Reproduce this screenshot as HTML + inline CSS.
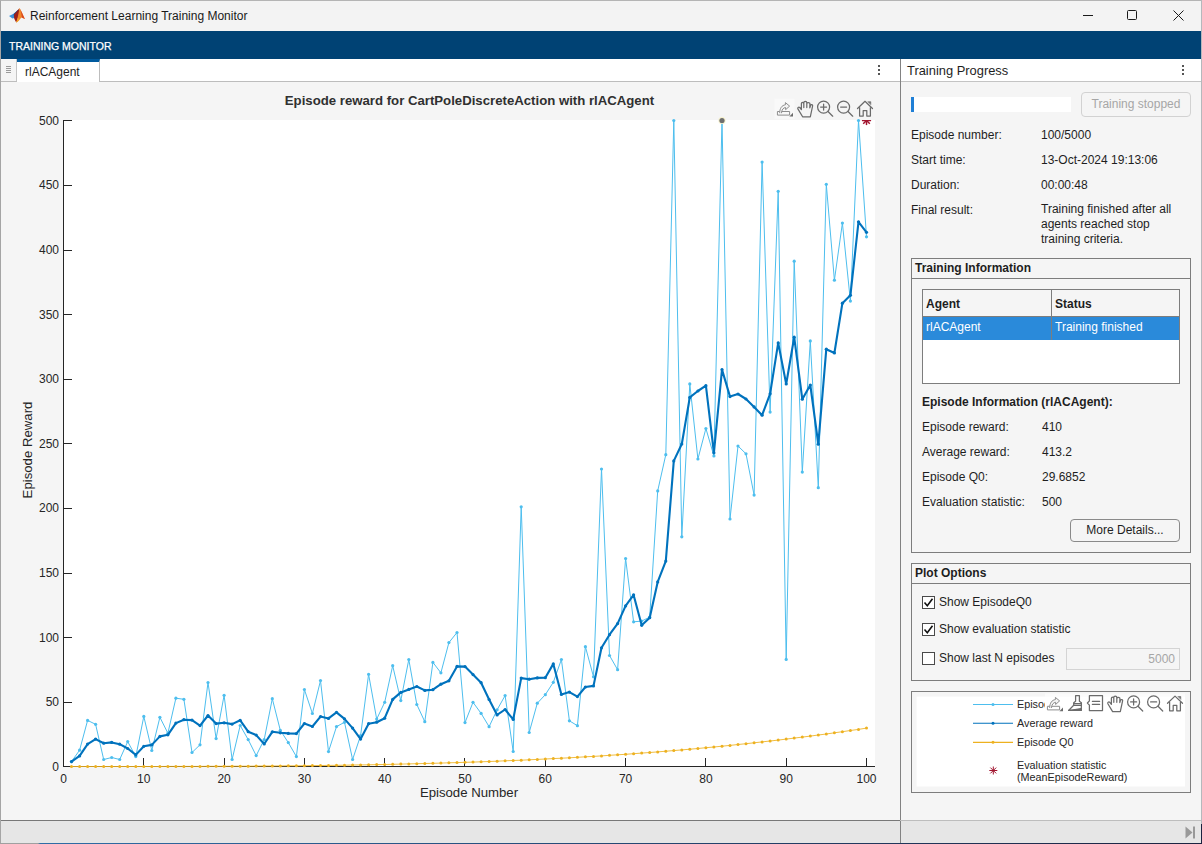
<!DOCTYPE html>
<html><head><meta charset="utf-8"><title>Reinforcement Learning Training Monitor</title>
<style>
*{box-sizing:border-box;margin:0;padding:0}
html,body{width:1202px;height:844px;overflow:hidden;background:#1b2340}
body{font-family:"Liberation Sans",sans-serif;font-size:12px;color:#1e1e1e;position:relative}
.abs{position:absolute}
#win{position:absolute;left:0;top:0;width:1201px;height:843px;background:#f5f5f5;border-top:1px solid #b4b4b4;border-left:1px solid #a5a5a5}
#titlebar{position:absolute;left:1px;top:1px;width:1200px;height:30px;background:#f3f3f3}
#titlebar .t{position:absolute;left:29px;top:8px;font-size:12px;color:#1a1a1a;white-space:nowrap}
#strip{position:absolute;left:1px;top:31px;width:1200px;height:28px;background:#004274}
#strip .t{position:absolute;left:8px;top:9px;font-size:10.5px;color:#fff;white-space:nowrap;-webkit-text-stroke:0.25px #fff}
#tabrow{position:absolute;left:1px;top:59px;width:899px;height:23px;background:#fff;border-bottom:1px solid #bdbdbd}
#grip{position:absolute;left:0;top:0;width:16px;height:22px;background:#f5f5f5;border-right:1px solid #c4c4c4}
#tab{position:absolute;left:16px;top:0;width:83px;height:23px;background:#fff;border-top:3px solid #005a9e;border-right:1px solid #bdbdbd}
#tab span{position:absolute;left:8px;top:3px;font-size:12px;color:#1e1e1e}
#doc{position:absolute;left:1px;top:82px;width:899px;height:738px;background:#f5f5f5}
.chart{position:absolute;left:-1px;top:0}
#vdiv{position:absolute;left:900px;top:59px;width:1px;height:784px;background:#828282}
#side{position:absolute;left:901px;top:59px;width:300px;height:761px;background:#f5f5f5}
#sidehead{position:absolute;left:0;top:0;width:300px;height:23px;background:#fff;border-bottom:1px solid #c4c4c4}
#sidehead span{position:absolute;left:6px;top:4px;font-size:12.9px;color:#1e1e1e}
.kebab{position:absolute;width:2px;height:2px;background:#555;box-shadow:0 4px 0 #555,0 8px 0 #555}
#status{position:absolute;left:1px;top:820px;width:1200px;height:23px;background:#e6e6e6;border-top:1px solid #bdbdbd}
.lbl{position:absolute;white-space:nowrap;font-size:12px;line-height:15px;color:#1e1e1e}
.panel{position:absolute;border:1px solid #7d7d7d}
.panel .pt{position:absolute;left:0;top:0;right:0;height:20px;border-bottom:1px solid #7d7d7d;font-weight:bold;font-size:12px;padding:2px 0 0 3px}
.btn{position:absolute;border:1px solid #8a8a8a;border-radius:4px;text-align:center;font-size:12px;background:#f5f5f5}
.cb{position:absolute;width:13px;height:13px;border:1px solid #4a4a4a;background:#fff}
</style></head><body>
<div id="win"></div><div class="abs" style="left:1201px;top:0;width:1px;height:824px;background:#b4b8bc"></div><div class="abs" style="left:0;top:843px;width:1202px;height:1px;background:linear-gradient(90deg,#a0a0a0 0,#a0a0a0 38px,#2f6da6 40px,#1b2340 100%)"></div>
<div id="titlebar">
 <svg class="abs" style="left:8px;top:6.5px" width="16" height="15" viewBox="0 0 16 15">
  <path d="M0 8 L5.1 5.5 L9.4 1.5 L7 8 L5.1 10 L3.5 10.5 Z" fill="#3a8fd8"/>
  <path d="M4.6 6 L9.4 1.5 L7.5 7.5 L5.1 10 Z" fill="#20508f"/>
  <path d="M5.1 6.6 L9.4 1.5 L10.3 0.3 L10.5 6 L7.2 14.5 L5.4 11.1 L5.1 10 Z" fill="#9c1f1a"/>
  <path d="M10.3 0.3 C11 0.3 12 2 15.9 11.1 C14.5 10.5 13.5 9.8 12.5 9.5 C11 11 9 14 7.2 14.5 C8.5 11 9.8 5 10.3 0.3 Z" fill="#f0862a"/>
  <path d="M11 1 C12 2.5 14 7 15.9 11.1 C14.5 10.5 13.5 9.8 12.8 9.6 C12.6 6 12 3 11 1 Z" fill="#d9451f"/>
  <path d="M7.2 14.5 C8 13 8.6 11.5 9 10 L10.2 11.5 C9.2 13 8 14.3 7.2 14.5Z" fill="#f7a81d"/>
 </svg>
 <div class="t">Reinforcement Learning Training Monitor</div>
 <svg class="abs" style="left:1070px;top:0" width="130" height="30" viewBox="0 0 130 30" fill="none" stroke="#1a1a1a" stroke-width="1">
  <path d="M11.5 14.5 H21.5" shape-rendering="crispEdges"/>
  <rect x="56.5" y="9.5" width="9" height="9" rx="1"/>
  <path d="M102.5 9.5 L112.5 19.5 M112.5 9.5 L102.5 19.5"/>
 </svg>
</div>
<div id="strip"><div class="t">TRAINING MONITOR</div></div>
<div id="tabrow">
 <div id="grip"><svg class="abs" style="left:5px;top:7px" width="6" height="9"><path d="M0 0.5H5M0 2.5H5M0 4.5H5M0 6.5H5" stroke="#9a9a9a" stroke-width="1" shape-rendering="crispEdges"/></svg></div>
 <div id="tab"><span>rlACAgent</span></div>
 <div class="kebab" style="left:877px;top:6px"></div>
</div>
<div id="doc">
<svg class="chart" width="900" height="738" viewBox="0 82 900 738">
<defs><clipPath id="pc"><rect x="63" y="120" width="812" height="647"/></clipPath></defs>
<rect x="63" y="120" width="812" height="647" fill="#fff"/>
<polyline clip-path="url(#pc)" points="71.5,761.6 79.6,750.2 87.6,720.4 95.6,724.3 103.7,759.5 111.7,757.5 119.7,759.5 127.7,741.6 135.8,756.6 143.8,716.4 151.8,750.5 159.9,717.3 167.9,733.2 175.9,698.2 183.9,699.3 192.0,752.5 200.0,744.8 208.0,682.5 216.1,738.6 224.1,695.3 232.1,759.5 240.2,725.5 248.2,739.6 256.2,755.6 264.2,739.6 272.3,698.7 280.3,730.3 288.3,742.6 296.4,756.6 304.4,689.5 312.4,713.5 320.5,680.6 328.5,751.6 336.5,726.6 344.5,722.3 352.6,759.5 360.6,735.6 368.6,674.3 376.7,719.1 384.7,702.3 392.7,665.7 400.8,700.6 408.8,659.5 416.8,704.5 424.8,721.7 432.9,662.4 440.9,672.8 448.9,642.6 457.0,632.5 465.0,722.6 473.0,702.3 481.1,713.4 489.1,726.7 497.1,709.8 505.1,695.6 513.2,751.5 521.2,506.8 529.2,732.5 537.3,703.2 545.3,694.7 553.3,682.3 561.4,659.5 569.4,720.8 577.4,725.7 585.4,646.7 593.5,676.8 601.5,469.0 609.5,655.5 617.6,669.7 625.6,558.5 633.6,621.8 641.7,621.1 649.7,617.1 657.7,490.9 665.8,454.7 673.8,120.5 681.8,536.8 689.8,383.9 697.9,459.0 705.9,428.5 713.9,455.9 722.0,120.5 730.0,519.0 738.0,446.0 746.0,453.8 754.1,495.1 762.1,162.1 770.1,412.1 778.2,191.3 786.2,659.4 794.2,261.2 802.3,472.1 810.3,340.9 818.3,487.7 826.3,184.3 834.4,280.2 842.4,223.1 850.4,301.1 858.5,120.5 866.5,236.8" fill="none" stroke="#4DBEEE" stroke-width="1" stroke-linejoin="round"/>
<circle cx="71.5" cy="761.6" r="1.6" fill="#4DBEEE"/><circle cx="79.6" cy="750.2" r="1.6" fill="#4DBEEE"/><circle cx="87.6" cy="720.4" r="1.6" fill="#4DBEEE"/><circle cx="95.6" cy="724.3" r="1.6" fill="#4DBEEE"/><circle cx="103.7" cy="759.5" r="1.6" fill="#4DBEEE"/><circle cx="111.7" cy="757.5" r="1.6" fill="#4DBEEE"/><circle cx="119.7" cy="759.5" r="1.6" fill="#4DBEEE"/><circle cx="127.7" cy="741.6" r="1.6" fill="#4DBEEE"/><circle cx="135.8" cy="756.6" r="1.6" fill="#4DBEEE"/><circle cx="143.8" cy="716.4" r="1.6" fill="#4DBEEE"/><circle cx="151.8" cy="750.5" r="1.6" fill="#4DBEEE"/><circle cx="159.9" cy="717.3" r="1.6" fill="#4DBEEE"/><circle cx="167.9" cy="733.2" r="1.6" fill="#4DBEEE"/><circle cx="175.9" cy="698.2" r="1.6" fill="#4DBEEE"/><circle cx="183.9" cy="699.3" r="1.6" fill="#4DBEEE"/><circle cx="192.0" cy="752.5" r="1.6" fill="#4DBEEE"/><circle cx="200.0" cy="744.8" r="1.6" fill="#4DBEEE"/><circle cx="208.0" cy="682.5" r="1.6" fill="#4DBEEE"/><circle cx="216.1" cy="738.6" r="1.6" fill="#4DBEEE"/><circle cx="224.1" cy="695.3" r="1.6" fill="#4DBEEE"/><circle cx="232.1" cy="759.5" r="1.6" fill="#4DBEEE"/><circle cx="240.2" cy="725.5" r="1.6" fill="#4DBEEE"/><circle cx="248.2" cy="739.6" r="1.6" fill="#4DBEEE"/><circle cx="256.2" cy="755.6" r="1.6" fill="#4DBEEE"/><circle cx="264.2" cy="739.6" r="1.6" fill="#4DBEEE"/><circle cx="272.3" cy="698.7" r="1.6" fill="#4DBEEE"/><circle cx="280.3" cy="730.3" r="1.6" fill="#4DBEEE"/><circle cx="288.3" cy="742.6" r="1.6" fill="#4DBEEE"/><circle cx="296.4" cy="756.6" r="1.6" fill="#4DBEEE"/><circle cx="304.4" cy="689.5" r="1.6" fill="#4DBEEE"/><circle cx="312.4" cy="713.5" r="1.6" fill="#4DBEEE"/><circle cx="320.5" cy="680.6" r="1.6" fill="#4DBEEE"/><circle cx="328.5" cy="751.6" r="1.6" fill="#4DBEEE"/><circle cx="336.5" cy="726.6" r="1.6" fill="#4DBEEE"/><circle cx="344.5" cy="722.3" r="1.6" fill="#4DBEEE"/><circle cx="352.6" cy="759.5" r="1.6" fill="#4DBEEE"/><circle cx="360.6" cy="735.6" r="1.6" fill="#4DBEEE"/><circle cx="368.6" cy="674.3" r="1.6" fill="#4DBEEE"/><circle cx="376.7" cy="719.1" r="1.6" fill="#4DBEEE"/><circle cx="384.7" cy="702.3" r="1.6" fill="#4DBEEE"/><circle cx="392.7" cy="665.7" r="1.6" fill="#4DBEEE"/><circle cx="400.8" cy="700.6" r="1.6" fill="#4DBEEE"/><circle cx="408.8" cy="659.5" r="1.6" fill="#4DBEEE"/><circle cx="416.8" cy="704.5" r="1.6" fill="#4DBEEE"/><circle cx="424.8" cy="721.7" r="1.6" fill="#4DBEEE"/><circle cx="432.9" cy="662.4" r="1.6" fill="#4DBEEE"/><circle cx="440.9" cy="672.8" r="1.6" fill="#4DBEEE"/><circle cx="448.9" cy="642.6" r="1.6" fill="#4DBEEE"/><circle cx="457.0" cy="632.5" r="1.6" fill="#4DBEEE"/><circle cx="465.0" cy="722.6" r="1.6" fill="#4DBEEE"/><circle cx="473.0" cy="702.3" r="1.6" fill="#4DBEEE"/><circle cx="481.1" cy="713.4" r="1.6" fill="#4DBEEE"/><circle cx="489.1" cy="726.7" r="1.6" fill="#4DBEEE"/><circle cx="497.1" cy="709.8" r="1.6" fill="#4DBEEE"/><circle cx="505.1" cy="695.6" r="1.6" fill="#4DBEEE"/><circle cx="513.2" cy="751.5" r="1.6" fill="#4DBEEE"/><circle cx="521.2" cy="506.8" r="1.6" fill="#4DBEEE"/><circle cx="529.2" cy="732.5" r="1.6" fill="#4DBEEE"/><circle cx="537.3" cy="703.2" r="1.6" fill="#4DBEEE"/><circle cx="545.3" cy="694.7" r="1.6" fill="#4DBEEE"/><circle cx="553.3" cy="682.3" r="1.6" fill="#4DBEEE"/><circle cx="561.4" cy="659.5" r="1.6" fill="#4DBEEE"/><circle cx="569.4" cy="720.8" r="1.6" fill="#4DBEEE"/><circle cx="577.4" cy="725.7" r="1.6" fill="#4DBEEE"/><circle cx="585.4" cy="646.7" r="1.6" fill="#4DBEEE"/><circle cx="593.5" cy="676.8" r="1.6" fill="#4DBEEE"/><circle cx="601.5" cy="469.0" r="1.6" fill="#4DBEEE"/><circle cx="609.5" cy="655.5" r="1.6" fill="#4DBEEE"/><circle cx="617.6" cy="669.7" r="1.6" fill="#4DBEEE"/><circle cx="625.6" cy="558.5" r="1.6" fill="#4DBEEE"/><circle cx="633.6" cy="621.8" r="1.6" fill="#4DBEEE"/><circle cx="641.7" cy="621.1" r="1.6" fill="#4DBEEE"/><circle cx="649.7" cy="617.1" r="1.6" fill="#4DBEEE"/><circle cx="657.7" cy="490.9" r="1.6" fill="#4DBEEE"/><circle cx="665.8" cy="454.7" r="1.6" fill="#4DBEEE"/><circle cx="673.8" cy="120.5" r="1.6" fill="#4DBEEE"/><circle cx="681.8" cy="536.8" r="1.6" fill="#4DBEEE"/><circle cx="689.8" cy="383.9" r="1.6" fill="#4DBEEE"/><circle cx="697.9" cy="459.0" r="1.6" fill="#4DBEEE"/><circle cx="705.9" cy="428.5" r="1.6" fill="#4DBEEE"/><circle cx="713.9" cy="455.9" r="1.6" fill="#4DBEEE"/><circle cx="722.0" cy="120.5" r="1.6" fill="#4DBEEE"/><circle cx="730.0" cy="519.0" r="1.6" fill="#4DBEEE"/><circle cx="738.0" cy="446.0" r="1.6" fill="#4DBEEE"/><circle cx="746.0" cy="453.8" r="1.6" fill="#4DBEEE"/><circle cx="754.1" cy="495.1" r="1.6" fill="#4DBEEE"/><circle cx="762.1" cy="162.1" r="1.6" fill="#4DBEEE"/><circle cx="770.1" cy="412.1" r="1.6" fill="#4DBEEE"/><circle cx="778.2" cy="191.3" r="1.6" fill="#4DBEEE"/><circle cx="786.2" cy="659.4" r="1.6" fill="#4DBEEE"/><circle cx="794.2" cy="261.2" r="1.6" fill="#4DBEEE"/><circle cx="802.3" cy="472.1" r="1.6" fill="#4DBEEE"/><circle cx="810.3" cy="340.9" r="1.6" fill="#4DBEEE"/><circle cx="818.3" cy="487.7" r="1.6" fill="#4DBEEE"/><circle cx="826.3" cy="184.3" r="1.6" fill="#4DBEEE"/><circle cx="834.4" cy="280.2" r="1.6" fill="#4DBEEE"/><circle cx="842.4" cy="223.1" r="1.6" fill="#4DBEEE"/><circle cx="850.4" cy="301.1" r="1.6" fill="#4DBEEE"/><circle cx="858.5" cy="120.5" r="1.6" fill="#4DBEEE"/><circle cx="866.5" cy="236.8" r="1.6" fill="#4DBEEE"/>
<polyline clip-path="url(#pc)" points="71.5,761.6 79.6,755.9 87.6,744.1 95.6,739.1 103.7,743.2 111.7,742.4 119.7,744.2 127.7,748.5 135.8,754.9 143.8,746.3 151.8,744.9 159.9,736.4 167.9,734.8 175.9,723.1 183.9,719.7 192.0,720.1 200.0,725.6 208.0,715.5 216.1,723.6 224.1,722.8 232.1,724.1 240.2,720.3 248.2,731.7 256.2,735.1 264.2,744.0 272.3,731.8 280.3,732.8 288.3,733.4 296.4,733.6 304.4,723.5 312.4,726.5 320.5,716.6 328.5,718.4 336.5,712.4 344.5,718.9 352.6,728.1 360.6,739.1 368.6,723.7 376.7,722.2 384.7,718.2 392.7,699.4 400.8,692.4 408.8,689.4 416.8,686.5 424.8,690.4 432.9,689.7 440.9,684.2 448.9,680.8 457.0,666.4 465.0,666.6 473.0,674.6 481.1,682.7 489.1,699.5 497.1,714.9 505.1,709.5 513.2,719.4 521.2,678.1 529.2,679.2 537.3,677.9 545.3,677.7 553.3,663.9 561.4,694.4 569.4,692.1 577.4,696.6 585.4,687.0 593.5,685.9 601.5,647.8 609.5,634.7 617.6,623.6 625.6,605.9 633.6,594.9 641.7,625.3 649.7,617.7 657.7,581.9 665.8,561.1 673.8,460.9 681.8,444.0 689.8,397.4 697.9,391.0 705.9,385.7 713.9,452.8 722.0,369.6 730.0,396.6 738.0,394.0 746.0,399.0 754.1,406.9 762.1,415.2 770.1,393.8 778.2,342.9 786.2,384.0 794.2,337.2 802.3,399.2 810.3,385.0 818.3,444.2 826.3,349.2 834.4,353.0 842.4,303.2 850.4,295.3 858.5,221.8 866.5,232.3" fill="none" stroke="#0072BD" stroke-width="2.1" stroke-linejoin="round"/>
<circle cx="71.5" cy="761.6" r="1.6" fill="#0072BD"/><circle cx="79.6" cy="755.9" r="1.6" fill="#0072BD"/><circle cx="87.6" cy="744.1" r="1.6" fill="#0072BD"/><circle cx="95.6" cy="739.1" r="1.6" fill="#0072BD"/><circle cx="103.7" cy="743.2" r="1.6" fill="#0072BD"/><circle cx="111.7" cy="742.4" r="1.6" fill="#0072BD"/><circle cx="119.7" cy="744.2" r="1.6" fill="#0072BD"/><circle cx="127.7" cy="748.5" r="1.6" fill="#0072BD"/><circle cx="135.8" cy="754.9" r="1.6" fill="#0072BD"/><circle cx="143.8" cy="746.3" r="1.6" fill="#0072BD"/><circle cx="151.8" cy="744.9" r="1.6" fill="#0072BD"/><circle cx="159.9" cy="736.4" r="1.6" fill="#0072BD"/><circle cx="167.9" cy="734.8" r="1.6" fill="#0072BD"/><circle cx="175.9" cy="723.1" r="1.6" fill="#0072BD"/><circle cx="183.9" cy="719.7" r="1.6" fill="#0072BD"/><circle cx="192.0" cy="720.1" r="1.6" fill="#0072BD"/><circle cx="200.0" cy="725.6" r="1.6" fill="#0072BD"/><circle cx="208.0" cy="715.5" r="1.6" fill="#0072BD"/><circle cx="216.1" cy="723.6" r="1.6" fill="#0072BD"/><circle cx="224.1" cy="722.8" r="1.6" fill="#0072BD"/><circle cx="232.1" cy="724.1" r="1.6" fill="#0072BD"/><circle cx="240.2" cy="720.3" r="1.6" fill="#0072BD"/><circle cx="248.2" cy="731.7" r="1.6" fill="#0072BD"/><circle cx="256.2" cy="735.1" r="1.6" fill="#0072BD"/><circle cx="264.2" cy="744.0" r="1.6" fill="#0072BD"/><circle cx="272.3" cy="731.8" r="1.6" fill="#0072BD"/><circle cx="280.3" cy="732.8" r="1.6" fill="#0072BD"/><circle cx="288.3" cy="733.4" r="1.6" fill="#0072BD"/><circle cx="296.4" cy="733.6" r="1.6" fill="#0072BD"/><circle cx="304.4" cy="723.5" r="1.6" fill="#0072BD"/><circle cx="312.4" cy="726.5" r="1.6" fill="#0072BD"/><circle cx="320.5" cy="716.6" r="1.6" fill="#0072BD"/><circle cx="328.5" cy="718.4" r="1.6" fill="#0072BD"/><circle cx="336.5" cy="712.4" r="1.6" fill="#0072BD"/><circle cx="344.5" cy="718.9" r="1.6" fill="#0072BD"/><circle cx="352.6" cy="728.1" r="1.6" fill="#0072BD"/><circle cx="360.6" cy="739.1" r="1.6" fill="#0072BD"/><circle cx="368.6" cy="723.7" r="1.6" fill="#0072BD"/><circle cx="376.7" cy="722.2" r="1.6" fill="#0072BD"/><circle cx="384.7" cy="718.2" r="1.6" fill="#0072BD"/><circle cx="392.7" cy="699.4" r="1.6" fill="#0072BD"/><circle cx="400.8" cy="692.4" r="1.6" fill="#0072BD"/><circle cx="408.8" cy="689.4" r="1.6" fill="#0072BD"/><circle cx="416.8" cy="686.5" r="1.6" fill="#0072BD"/><circle cx="424.8" cy="690.4" r="1.6" fill="#0072BD"/><circle cx="432.9" cy="689.7" r="1.6" fill="#0072BD"/><circle cx="440.9" cy="684.2" r="1.6" fill="#0072BD"/><circle cx="448.9" cy="680.8" r="1.6" fill="#0072BD"/><circle cx="457.0" cy="666.4" r="1.6" fill="#0072BD"/><circle cx="465.0" cy="666.6" r="1.6" fill="#0072BD"/><circle cx="473.0" cy="674.6" r="1.6" fill="#0072BD"/><circle cx="481.1" cy="682.7" r="1.6" fill="#0072BD"/><circle cx="489.1" cy="699.5" r="1.6" fill="#0072BD"/><circle cx="497.1" cy="714.9" r="1.6" fill="#0072BD"/><circle cx="505.1" cy="709.5" r="1.6" fill="#0072BD"/><circle cx="513.2" cy="719.4" r="1.6" fill="#0072BD"/><circle cx="521.2" cy="678.1" r="1.6" fill="#0072BD"/><circle cx="529.2" cy="679.2" r="1.6" fill="#0072BD"/><circle cx="537.3" cy="677.9" r="1.6" fill="#0072BD"/><circle cx="545.3" cy="677.7" r="1.6" fill="#0072BD"/><circle cx="553.3" cy="663.9" r="1.6" fill="#0072BD"/><circle cx="561.4" cy="694.4" r="1.6" fill="#0072BD"/><circle cx="569.4" cy="692.1" r="1.6" fill="#0072BD"/><circle cx="577.4" cy="696.6" r="1.6" fill="#0072BD"/><circle cx="585.4" cy="687.0" r="1.6" fill="#0072BD"/><circle cx="593.5" cy="685.9" r="1.6" fill="#0072BD"/><circle cx="601.5" cy="647.8" r="1.6" fill="#0072BD"/><circle cx="609.5" cy="634.7" r="1.6" fill="#0072BD"/><circle cx="617.6" cy="623.6" r="1.6" fill="#0072BD"/><circle cx="625.6" cy="605.9" r="1.6" fill="#0072BD"/><circle cx="633.6" cy="594.9" r="1.6" fill="#0072BD"/><circle cx="641.7" cy="625.3" r="1.6" fill="#0072BD"/><circle cx="649.7" cy="617.7" r="1.6" fill="#0072BD"/><circle cx="657.7" cy="581.9" r="1.6" fill="#0072BD"/><circle cx="665.8" cy="561.1" r="1.6" fill="#0072BD"/><circle cx="673.8" cy="460.9" r="1.6" fill="#0072BD"/><circle cx="681.8" cy="444.0" r="1.6" fill="#0072BD"/><circle cx="689.8" cy="397.4" r="1.6" fill="#0072BD"/><circle cx="697.9" cy="391.0" r="1.6" fill="#0072BD"/><circle cx="705.9" cy="385.7" r="1.6" fill="#0072BD"/><circle cx="713.9" cy="452.8" r="1.6" fill="#0072BD"/><circle cx="722.0" cy="369.6" r="1.6" fill="#0072BD"/><circle cx="730.0" cy="396.6" r="1.6" fill="#0072BD"/><circle cx="738.0" cy="394.0" r="1.6" fill="#0072BD"/><circle cx="746.0" cy="399.0" r="1.6" fill="#0072BD"/><circle cx="754.1" cy="406.9" r="1.6" fill="#0072BD"/><circle cx="762.1" cy="415.2" r="1.6" fill="#0072BD"/><circle cx="770.1" cy="393.8" r="1.6" fill="#0072BD"/><circle cx="778.2" cy="342.9" r="1.6" fill="#0072BD"/><circle cx="786.2" cy="384.0" r="1.6" fill="#0072BD"/><circle cx="794.2" cy="337.2" r="1.6" fill="#0072BD"/><circle cx="802.3" cy="399.2" r="1.6" fill="#0072BD"/><circle cx="810.3" cy="385.0" r="1.6" fill="#0072BD"/><circle cx="818.3" cy="444.2" r="1.6" fill="#0072BD"/><circle cx="826.3" cy="349.2" r="1.6" fill="#0072BD"/><circle cx="834.4" cy="353.0" r="1.6" fill="#0072BD"/><circle cx="842.4" cy="303.2" r="1.6" fill="#0072BD"/><circle cx="850.4" cy="295.3" r="1.6" fill="#0072BD"/><circle cx="858.5" cy="221.8" r="1.6" fill="#0072BD"/><circle cx="866.5" cy="232.3" r="1.6" fill="#0072BD"/>
<g stroke="#262626" stroke-width="1" shape-rendering="crispEdges">
<line x1="63.5" y1="120" x2="63.5" y2="767"/>
<line x1="63" y1="766.5" x2="875" y2="766.5"/>
<line x1="63.5" y1="766" x2="63.5" y2="758"/>
<line x1="143.5" y1="766" x2="143.5" y2="758"/>
<line x1="224.5" y1="766" x2="224.5" y2="758"/>
<line x1="304.5" y1="766" x2="304.5" y2="758"/>
<line x1="384.5" y1="766" x2="384.5" y2="758"/>
<line x1="464.5" y1="766" x2="464.5" y2="758"/>
<line x1="545.5" y1="766" x2="545.5" y2="758"/>
<line x1="625.5" y1="766" x2="625.5" y2="758"/>
<line x1="705.5" y1="766" x2="705.5" y2="758"/>
<line x1="786.5" y1="766" x2="786.5" y2="758"/>
<line x1="866.5" y1="766" x2="866.5" y2="758"/>
<line x1="63" y1="766.5" x2="71.5" y2="766.5"/>
<line x1="63" y1="702.5" x2="71.5" y2="702.5"/>
<line x1="63" y1="637.5" x2="71.5" y2="637.5"/>
<line x1="63" y1="573.5" x2="71.5" y2="573.5"/>
<line x1="63" y1="508.5" x2="71.5" y2="508.5"/>
<line x1="63" y1="443.5" x2="71.5" y2="443.5"/>
<line x1="63" y1="379.5" x2="71.5" y2="379.5"/>
<line x1="63" y1="314.5" x2="71.5" y2="314.5"/>
<line x1="63" y1="250.5" x2="71.5" y2="250.5"/>
<line x1="63" y1="185.5" x2="71.5" y2="185.5"/>
<line x1="63" y1="120.5" x2="71.5" y2="120.5"/>
</g>
<polyline points="71.5,766.5 79.6,766.5 87.6,766.5 95.6,766.5 103.7,766.5 111.7,766.5 119.7,766.5 127.7,766.5 135.8,766.5 143.8,766.5 151.8,766.5 159.9,766.5 167.9,766.4 175.9,766.4 183.9,766.4 192.0,766.4 200.0,766.4 208.0,766.3 216.1,766.3 224.1,766.3 232.1,766.2 240.2,766.2 248.2,766.2 256.2,766.1 264.2,766.0 272.3,766.0 280.3,765.9 288.3,765.8 296.4,765.8 304.4,765.7 312.4,765.6 320.5,765.5 328.5,765.4 336.5,765.3 344.5,765.2 352.6,765.0 360.6,764.9 368.6,764.8 376.7,764.6 384.7,764.5 392.7,764.3 400.8,764.1 408.8,763.9 416.8,763.7 424.8,763.5 432.9,763.3 440.9,763.1 448.9,762.8 457.0,762.6 465.0,762.3 473.0,762.1 481.1,761.8 489.1,761.5 497.1,761.2 505.1,760.8 513.2,760.5 521.2,760.2 529.2,759.8 537.3,759.4 545.3,759.0 553.3,758.6 561.4,758.2 569.4,757.8 577.4,757.3 585.4,756.8 593.5,756.4 601.5,755.9 609.5,755.3 617.6,754.8 625.6,754.3 633.6,753.7 641.7,753.1 649.7,752.5 657.7,751.9 665.8,751.2 673.8,750.6 681.8,749.9 689.8,749.2 697.9,748.5 705.9,747.7 713.9,747.0 722.0,746.2 730.0,745.4 738.0,744.5 746.0,743.7 754.1,742.8 762.1,741.9 770.1,741.0 778.2,740.1 786.2,739.1 794.2,738.1 802.3,737.1 810.3,736.1 818.3,735.0 826.3,734.0 834.4,732.8 842.4,731.7 850.4,730.5 858.5,729.4 866.5,728.1" fill="none" stroke="#EDB120" stroke-width="1" stroke-opacity="0.85" stroke-linejoin="round"/>
<circle cx="71.5" cy="766.5" r="1.5" fill="#EDB120"/><circle cx="79.6" cy="766.5" r="1.5" fill="#EDB120"/><circle cx="87.6" cy="766.5" r="1.5" fill="#EDB120"/><circle cx="95.6" cy="766.5" r="1.5" fill="#EDB120"/><circle cx="103.7" cy="766.5" r="1.5" fill="#EDB120"/><circle cx="111.7" cy="766.5" r="1.5" fill="#EDB120"/><circle cx="119.7" cy="766.5" r="1.5" fill="#EDB120"/><circle cx="127.7" cy="766.5" r="1.5" fill="#EDB120"/><circle cx="135.8" cy="766.5" r="1.5" fill="#EDB120"/><circle cx="143.8" cy="766.5" r="1.5" fill="#EDB120"/><circle cx="151.8" cy="766.5" r="1.5" fill="#EDB120"/><circle cx="159.9" cy="766.5" r="1.5" fill="#EDB120"/><circle cx="167.9" cy="766.4" r="1.5" fill="#EDB120"/><circle cx="175.9" cy="766.4" r="1.5" fill="#EDB120"/><circle cx="183.9" cy="766.4" r="1.5" fill="#EDB120"/><circle cx="192.0" cy="766.4" r="1.5" fill="#EDB120"/><circle cx="200.0" cy="766.4" r="1.5" fill="#EDB120"/><circle cx="208.0" cy="766.3" r="1.5" fill="#EDB120"/><circle cx="216.1" cy="766.3" r="1.5" fill="#EDB120"/><circle cx="224.1" cy="766.3" r="1.5" fill="#EDB120"/><circle cx="232.1" cy="766.2" r="1.5" fill="#EDB120"/><circle cx="240.2" cy="766.2" r="1.5" fill="#EDB120"/><circle cx="248.2" cy="766.2" r="1.5" fill="#EDB120"/><circle cx="256.2" cy="766.1" r="1.5" fill="#EDB120"/><circle cx="264.2" cy="766.0" r="1.5" fill="#EDB120"/><circle cx="272.3" cy="766.0" r="1.5" fill="#EDB120"/><circle cx="280.3" cy="765.9" r="1.5" fill="#EDB120"/><circle cx="288.3" cy="765.8" r="1.5" fill="#EDB120"/><circle cx="296.4" cy="765.8" r="1.5" fill="#EDB120"/><circle cx="304.4" cy="765.7" r="1.5" fill="#EDB120"/><circle cx="312.4" cy="765.6" r="1.5" fill="#EDB120"/><circle cx="320.5" cy="765.5" r="1.5" fill="#EDB120"/><circle cx="328.5" cy="765.4" r="1.5" fill="#EDB120"/><circle cx="336.5" cy="765.3" r="1.5" fill="#EDB120"/><circle cx="344.5" cy="765.2" r="1.5" fill="#EDB120"/><circle cx="352.6" cy="765.0" r="1.5" fill="#EDB120"/><circle cx="360.6" cy="764.9" r="1.5" fill="#EDB120"/><circle cx="368.6" cy="764.8" r="1.5" fill="#EDB120"/><circle cx="376.7" cy="764.6" r="1.5" fill="#EDB120"/><circle cx="384.7" cy="764.5" r="1.5" fill="#EDB120"/><circle cx="392.7" cy="764.3" r="1.5" fill="#EDB120"/><circle cx="400.8" cy="764.1" r="1.5" fill="#EDB120"/><circle cx="408.8" cy="763.9" r="1.5" fill="#EDB120"/><circle cx="416.8" cy="763.7" r="1.5" fill="#EDB120"/><circle cx="424.8" cy="763.5" r="1.5" fill="#EDB120"/><circle cx="432.9" cy="763.3" r="1.5" fill="#EDB120"/><circle cx="440.9" cy="763.1" r="1.5" fill="#EDB120"/><circle cx="448.9" cy="762.8" r="1.5" fill="#EDB120"/><circle cx="457.0" cy="762.6" r="1.5" fill="#EDB120"/><circle cx="465.0" cy="762.3" r="1.5" fill="#EDB120"/><circle cx="473.0" cy="762.1" r="1.5" fill="#EDB120"/><circle cx="481.1" cy="761.8" r="1.5" fill="#EDB120"/><circle cx="489.1" cy="761.5" r="1.5" fill="#EDB120"/><circle cx="497.1" cy="761.2" r="1.5" fill="#EDB120"/><circle cx="505.1" cy="760.8" r="1.5" fill="#EDB120"/><circle cx="513.2" cy="760.5" r="1.5" fill="#EDB120"/><circle cx="521.2" cy="760.2" r="1.5" fill="#EDB120"/><circle cx="529.2" cy="759.8" r="1.5" fill="#EDB120"/><circle cx="537.3" cy="759.4" r="1.5" fill="#EDB120"/><circle cx="545.3" cy="759.0" r="1.5" fill="#EDB120"/><circle cx="553.3" cy="758.6" r="1.5" fill="#EDB120"/><circle cx="561.4" cy="758.2" r="1.5" fill="#EDB120"/><circle cx="569.4" cy="757.8" r="1.5" fill="#EDB120"/><circle cx="577.4" cy="757.3" r="1.5" fill="#EDB120"/><circle cx="585.4" cy="756.8" r="1.5" fill="#EDB120"/><circle cx="593.5" cy="756.4" r="1.5" fill="#EDB120"/><circle cx="601.5" cy="755.9" r="1.5" fill="#EDB120"/><circle cx="609.5" cy="755.3" r="1.5" fill="#EDB120"/><circle cx="617.6" cy="754.8" r="1.5" fill="#EDB120"/><circle cx="625.6" cy="754.3" r="1.5" fill="#EDB120"/><circle cx="633.6" cy="753.7" r="1.5" fill="#EDB120"/><circle cx="641.7" cy="753.1" r="1.5" fill="#EDB120"/><circle cx="649.7" cy="752.5" r="1.5" fill="#EDB120"/><circle cx="657.7" cy="751.9" r="1.5" fill="#EDB120"/><circle cx="665.8" cy="751.2" r="1.5" fill="#EDB120"/><circle cx="673.8" cy="750.6" r="1.5" fill="#EDB120"/><circle cx="681.8" cy="749.9" r="1.5" fill="#EDB120"/><circle cx="689.8" cy="749.2" r="1.5" fill="#EDB120"/><circle cx="697.9" cy="748.5" r="1.5" fill="#EDB120"/><circle cx="705.9" cy="747.7" r="1.5" fill="#EDB120"/><circle cx="713.9" cy="747.0" r="1.5" fill="#EDB120"/><circle cx="722.0" cy="746.2" r="1.5" fill="#EDB120"/><circle cx="730.0" cy="745.4" r="1.5" fill="#EDB120"/><circle cx="738.0" cy="744.5" r="1.5" fill="#EDB120"/><circle cx="746.0" cy="743.7" r="1.5" fill="#EDB120"/><circle cx="754.1" cy="742.8" r="1.5" fill="#EDB120"/><circle cx="762.1" cy="741.9" r="1.5" fill="#EDB120"/><circle cx="770.1" cy="741.0" r="1.5" fill="#EDB120"/><circle cx="778.2" cy="740.1" r="1.5" fill="#EDB120"/><circle cx="786.2" cy="739.1" r="1.5" fill="#EDB120"/><circle cx="794.2" cy="738.1" r="1.5" fill="#EDB120"/><circle cx="802.3" cy="737.1" r="1.5" fill="#EDB120"/><circle cx="810.3" cy="736.1" r="1.5" fill="#EDB120"/><circle cx="818.3" cy="735.0" r="1.5" fill="#EDB120"/><circle cx="826.3" cy="734.0" r="1.5" fill="#EDB120"/><circle cx="834.4" cy="732.8" r="1.5" fill="#EDB120"/><circle cx="842.4" cy="731.7" r="1.5" fill="#EDB120"/><circle cx="850.4" cy="730.5" r="1.5" fill="#EDB120"/><circle cx="858.5" cy="729.4" r="1.5" fill="#EDB120"/><circle cx="866.5" cy="728.1" r="1.5" fill="#EDB120"/>
<g font-family="Liberation Sans, sans-serif" font-size="12" fill="#262626">
<text x="63.5" y="783" text-anchor="middle">0</text>
<text x="143.8" y="783" text-anchor="middle">10</text>
<text x="224.1" y="783" text-anchor="middle">20</text>
<text x="304.4" y="783" text-anchor="middle">30</text>
<text x="384.7" y="783" text-anchor="middle">40</text>
<text x="465.0" y="783" text-anchor="middle">50</text>
<text x="545.3" y="783" text-anchor="middle">60</text>
<text x="625.6" y="783" text-anchor="middle">70</text>
<text x="705.9" y="783" text-anchor="middle">80</text>
<text x="786.2" y="783" text-anchor="middle">90</text>
<text x="866.5" y="783" text-anchor="middle">100</text>
<text x="59" y="770.8" text-anchor="end">0</text>
<text x="59" y="706.2" text-anchor="end">50</text>
<text x="59" y="641.6" text-anchor="end">100</text>
<text x="59" y="577.0" text-anchor="end">150</text>
<text x="59" y="512.4" text-anchor="end">200</text>
<text x="59" y="447.8" text-anchor="end">250</text>
<text x="59" y="383.2" text-anchor="end">300</text>
<text x="59" y="318.6" text-anchor="end">350</text>
<text x="59" y="254.0" text-anchor="end">400</text>
<text x="59" y="189.4" text-anchor="end">450</text>
<text x="59" y="124.8" text-anchor="end">500</text>
</g>
<text x="469" y="797" text-anchor="middle" font-family="Liberation Sans, sans-serif" font-size="13.2" fill="#262626">Episode Number</text>
<text transform="translate(31.8,450) rotate(-90)" text-anchor="middle" font-family="Liberation Sans, sans-serif" font-size="13.2" fill="#262626">Episode Reward</text>
<text x="469.5" y="105" text-anchor="middle" font-family="Liberation Sans, sans-serif" font-size="13.2" font-weight="bold" fill="#303030">Episode reward for CartPoleDiscreteAction with rlACAgent</text>
<g clip-path="url(#pc)" stroke="#A2142F" stroke-width="1.5"><line x1="861.8999999999999" y1="120.5" x2="871.0999999999999" y2="120.5"/><line x1="866.4999999999999" y1="115.9" x2="866.4999999999999" y2="125.1"/><line x1="863.1999999999999" y1="117.2" x2="869.7999999999998" y2="123.8"/><line x1="863.1999999999999" y1="123.8" x2="869.7999999999998" y2="117.2"/></g>
<circle cx="722.0" cy="120.5" r="3.6" fill="#f5f0c8" opacity="0.9"/><circle cx="722.0" cy="120.5" r="2.6" fill="#6e6e6e"/>
<rect x="774.6" y="98.7" width="20" height="20" fill="#f9f9f9"/>
<g transform="translate(777,100.5) scale(1.0)" fill="none" stroke="#6b6b6b" stroke-width="1.25" stroke-linecap="round" stroke-linejoin="round"><g stroke="#8e8e8e" stroke-width="1"><rect x="0.8" y="11" width="11.8" height="3.6"/><path d="M2.7 12.3 C2.7 7.6 5 4.7 8.4 4.3 V2.1 L12.6 5.6 L8.6 9.2 V7 C6.5 7.2 4.7 9 4.5 12.3" fill="#f5f5f5"/></g><path d="M12.4 15.9 H16 V12.2 Z" fill="#6b6b6b" stroke="none"/></g><g transform="translate(797,100.5) scale(1.0)" fill="none" stroke="#6b6b6b" stroke-width="1.25" stroke-linecap="round" stroke-linejoin="round"><path transform="translate(0,-0.4)" d="M5.6 16.7 L0.9 8.8 C0.3 7.6 1.6 6.6 2.8 7.4 L4.4 9.4 V3.4 C4.4 2.0 6.8 2.0 6.8 3.4 V7.4 V2.4 C6.8 1.0 9.8 1.0 9.8 2.4 V7.4 V3.4 C10 2.2 13 2.2 12.9 3.6 L12.8 7.7 L13.5 5.4 C13.9 4.2 15.9 4.4 15.6 5.9 L13.3 16.7 Z"/></g><g transform="translate(817,100.5) scale(1.0)" fill="none" stroke="#6b6b6b" stroke-width="1.25" stroke-linecap="round" stroke-linejoin="round"><circle cx="6.6" cy="6.6" r="6"/><path d="M11 11 L15.7 15.7"/><path d="M3.6 6.6 H9.6 M6.6 3.6 V9.6"/></g><g transform="translate(837,100.5) scale(1.0)" fill="none" stroke="#6b6b6b" stroke-width="1.25" stroke-linecap="round" stroke-linejoin="round"><circle cx="6.6" cy="6.6" r="6"/><path d="M11 11 L15.7 15.7"/><path d="M3.6 6.6 H9.6"/></g><g transform="translate(857,100.5) scale(1.0)" fill="none" stroke="#6b6b6b" stroke-width="1.25" stroke-linecap="round" stroke-linejoin="round"><path d="M0.5 8 L8 0.8 L15.5 8"/><path d="M2.6 7 V15.5 H6.2 V10 H9.8 V15.5 H13.4 V7"/><path d="M11.2 1.2 H13.8 V3.8 Z" fill="#6b6b6b" stroke-width="0.6"/></g>
</svg>
</div>
<div id="vdiv"></div>
<div id="side">
 <div id="sidehead"><span>Training Progress</span><div class="kebab" style="left:281px;top:6px"></div></div>
 <!-- progress -->
 <div class="abs" style="left:10px;top:38px;width:160px;height:15px;background:#fff"><div style="width:3px;height:15px;background:#1f7fd6"></div></div>
 <div class="btn" style="left:180px;top:33px;width:110px;height:25px;border-color:#d2d2d2;color:#a6a6a6;line-height:23px">Training stopped</div>
 <div class="lbl" style="left:10px;top:69px">Episode number:</div><div class="lbl" style="left:140px;top:69px">100/5000</div>
 <div class="lbl" style="left:10px;top:94px">Start time:</div><div class="lbl" style="left:140px;top:94px">13-Oct-2024 19:13:06</div>
 <div class="lbl" style="left:10px;top:119px">Duration:</div><div class="lbl" style="left:140px;top:119px">00:00:48</div>
 <div class="lbl" style="left:10px;top:144px">Final result:</div><div class="lbl" style="left:140px;top:143px">Training finished after all</div><div class="lbl" style="left:140px;top:158px">agents reached stop</div><div class="lbl" style="left:140px;top:173px">training criteria.</div>
 <!-- Training information panel -->
 <div class="panel" style="left:10px;top:199px;width:280px;height:295px">
  <div class="pt">Training Information</div>
  <div class="abs" style="left:10px;top:30px;width:258px;height:95px;border:1px solid #7d7d7d;background:#fff">
   <div class="abs" style="left:0;top:0;width:256px;height:27px;background:#f5f5f5;border-bottom:1px solid #7d7d7d"></div>
   <div class="abs" style="left:0;top:27px;width:256px;height:23px;background:#2a8ada"></div>
   <div class="abs" style="left:128px;top:0;width:1px;height:50px;background:#7d7d7d"></div>
   <div class="lbl" style="left:3px;top:7px;font-weight:bold">Agent</div>
   <div class="lbl" style="left:132px;top:7px;font-weight:bold">Status</div>
   <div class="lbl" style="left:3px;top:30px;color:#fff">rlACAgent</div>
   <div class="lbl" style="left:132px;top:30px;color:#fff">Training finished</div>
  </div>
  <div class="lbl" style="left:10px;top:136px;font-weight:bold">Episode Information (rlACAgent):</div>
  <div class="lbl" style="left:10px;top:161px">Episode reward:</div><div class="lbl" style="left:130px;top:161px">410</div>
  <div class="lbl" style="left:10px;top:186px">Average reward:</div><div class="lbl" style="left:130px;top:186px">413.2</div>
  <div class="lbl" style="left:10px;top:211px">Episode Q0:</div><div class="lbl" style="left:130px;top:211px">29.6852</div>
  <div class="lbl" style="left:10px;top:236px">Evaluation statistic:</div><div class="lbl" style="left:130px;top:236px">500</div>
  <div class="btn" style="left:158px;top:260px;width:110px;height:23px;line-height:21px;color:#1e1e1e">More Details...</div>
 </div>
 <!-- Plot options -->
 <div class="panel" style="left:10px;top:504px;width:280px;height:118px">
  <div class="pt">Plot Options</div>
  <div class="cb" style="left:10px;top:32px"><svg width="11" height="11" viewBox="0 0 11 11"><path d="M1.5 5.5 L4.3 8.7 L9.5 1.8" fill="none" stroke="#111" stroke-width="1.6"/></svg></div>
  <div class="lbl" style="left:27px;top:31px">Show EpisodeQ0</div>
  <div class="cb" style="left:10px;top:59px"><svg width="11" height="11" viewBox="0 0 11 11"><path d="M1.5 5.5 L4.3 8.7 L9.5 1.8" fill="none" stroke="#111" stroke-width="1.6"/></svg></div>
  <div class="lbl" style="left:27px;top:58px">Show evaluation statistic</div>
  <div class="cb" style="left:10px;top:88px"></div>
  <div class="lbl" style="left:27px;top:87px">Show last N episodes</div>
  <div class="abs" style="left:154px;top:84px;width:114px;height:22px;border:1px solid #d4d4d4;background:#f5f5f5;color:#a6a6a6;font-size:12px;text-align:right;padding:3px 4px 0 0">5000</div>
 </div>
 <!-- legend panel -->
 <div class="panel" style="left:10px;top:632px;width:280px;height:102px">
  <div class="abs" style="left:4px;top:5px;width:269px;height:90px">
<svg class="legend" style="overflow:visible" width="269" height="90" viewBox="916 697 269 90">
<rect x="1045" y="693.5" width="140" height="4" fill="#fbfbfb"/>
<rect x="916.6" y="696.6" width="268.4" height="89.9" fill="#fff"/>
<line x1="973" y1="704.5" x2="1013" y2="704.5" stroke="#4DBEEE" stroke-width="1"/><circle cx="993" cy="704.5" r="1.5" fill="#4DBEEE"/>
<text x="1017" y="708.3" font-family="Liberation Sans, sans-serif" font-size="10.8" fill="#262626">Episode reward</text>
<line x1="973" y1="723.3" x2="1013" y2="723.3" stroke="#0072BD" stroke-width="1.1"/><circle cx="993" cy="723.3" r="1.5" fill="#0072BD"/>
<text x="1017" y="727.0999999999999" font-family="Liberation Sans, sans-serif" font-size="10.8" fill="#262626">Average reward</text>
<line x1="973" y1="742.3" x2="1013" y2="742.3" stroke="#EDB120" stroke-width="1.2"/><circle cx="993" cy="742.3" r="1.5" fill="#EDB120"/>
<text x="1017" y="746.0999999999999" font-family="Liberation Sans, sans-serif" font-size="10.8" fill="#262626">Episode Q0</text>
<g stroke="#A2142F" stroke-width="1"><line x1="989.3" y1="770.5" x2="997.3" y2="770.5"/><line x1="993.3" y1="766.5" x2="993.3" y2="774.5"/><line x1="990.4" y1="767.6" x2="996.1999999999999" y2="773.4"/><line x1="990.4" y1="773.4" x2="996.1999999999999" y2="767.6"/></g>
<text x="1017" y="768.7" font-family="Liberation Sans, sans-serif" font-size="10.8" fill="#262626">Evaluation statistic</text>
<text x="1017" y="780.9" font-family="Liberation Sans, sans-serif" font-size="10.8" fill="#262626">(MeanEpisodeReward)</text>
<rect x="1045" y="697" width="140" height="16" fill="#fff"/>
<g transform="translate(1047,695.3) scale(1.0)" fill="none" stroke="#6b6b6b" stroke-width="1.25" stroke-linecap="round" stroke-linejoin="round"><g stroke="#8e8e8e" stroke-width="1"><rect x="0.8" y="11" width="11.8" height="3.6"/><path d="M2.7 12.3 C2.7 7.6 5 4.7 8.4 4.3 V2.1 L12.6 5.6 L8.6 9.2 V7 C6.5 7.2 4.7 9 4.5 12.3" fill="#f5f5f5"/></g><path d="M12.4 15.9 H16 V12.2 Z" fill="#6b6b6b" stroke="none"/></g><g transform="translate(1067,695.3) scale(1.0)" fill="none" stroke="#6b6b6b" stroke-width="1.25" stroke-linecap="round" stroke-linejoin="round"><path d="M8.6 0.4 H12.4 V6 L14.4 7.4 V10 H6.7 V7.4 L8.6 6 Z"/><path d="M6.7 8.3 H14.4"/><path d="M6.7 10 L1.6 15.2 H14.2 L14.4 10"/><path d="M1.6 15.2 H14.2 V13.2 Z" fill="#6b6b6b"/></g><g transform="translate(1087,695.3) scale(1.0)" fill="none" stroke="#6b6b6b" stroke-width="1.25" stroke-linecap="round" stroke-linejoin="round"><path d="M2.4 0.4 H15.5 V15.3 H2.4 V9.8 L0.4 7.7 L2.4 5.6 Z"/><path d="M5.4 6.1 H12.6 M5.4 9.1 H12.6"/></g><g transform="translate(1107,695.3) scale(1.0)" fill="none" stroke="#6b6b6b" stroke-width="1.25" stroke-linecap="round" stroke-linejoin="round"><path transform="translate(0,-0.4)" d="M5.6 16.7 L0.9 8.8 C0.3 7.6 1.6 6.6 2.8 7.4 L4.4 9.4 V3.4 C4.4 2.0 6.8 2.0 6.8 3.4 V7.4 V2.4 C6.8 1.0 9.8 1.0 9.8 2.4 V7.4 V3.4 C10 2.2 13 2.2 12.9 3.6 L12.8 7.7 L13.5 5.4 C13.9 4.2 15.9 4.4 15.6 5.9 L13.3 16.7 Z"/></g><g transform="translate(1127,695.3) scale(1.0)" fill="none" stroke="#6b6b6b" stroke-width="1.25" stroke-linecap="round" stroke-linejoin="round"><circle cx="6.6" cy="6.6" r="6"/><path d="M11 11 L15.7 15.7"/><path d="M3.6 6.6 H9.6 M6.6 3.6 V9.6"/></g><g transform="translate(1147,695.3) scale(1.0)" fill="none" stroke="#6b6b6b" stroke-width="1.25" stroke-linecap="round" stroke-linejoin="round"><circle cx="6.6" cy="6.6" r="6"/><path d="M11 11 L15.7 15.7"/><path d="M3.6 6.6 H9.6"/></g><g transform="translate(1167,695.3) scale(1.0)" fill="none" stroke="#6b6b6b" stroke-width="1.25" stroke-linecap="round" stroke-linejoin="round"><path d="M0.5 8 L8 0.8 L15.5 8"/><path d="M2.6 7 V15.5 H6.2 V10 H9.8 V15.5 H13.4 V7"/><path d="M11.2 1.2 H13.8 V3.8 Z" fill="#6b6b6b" stroke-width="0.6"/></g>
</svg>
  </div>
 </div>
</div>
<div id="status"><div class="abs" style="left:0;top:-1px;width:899px;height:1px;background:#787878"></div>
 <div class="abs" style="left:899px;top:0;width:1px;height:22px;background:#828282"></div>
 <svg class="abs" style="left:1184px;top:5px" width="12" height="13" viewBox="0 0 12 13"><path d="M0.5 0.5 L7.5 6.5 L0.5 12.5 Z" fill="#999"/><rect x="8" y="0.5" width="2" height="12" fill="#999"/></svg>
</div>
</body></html>
